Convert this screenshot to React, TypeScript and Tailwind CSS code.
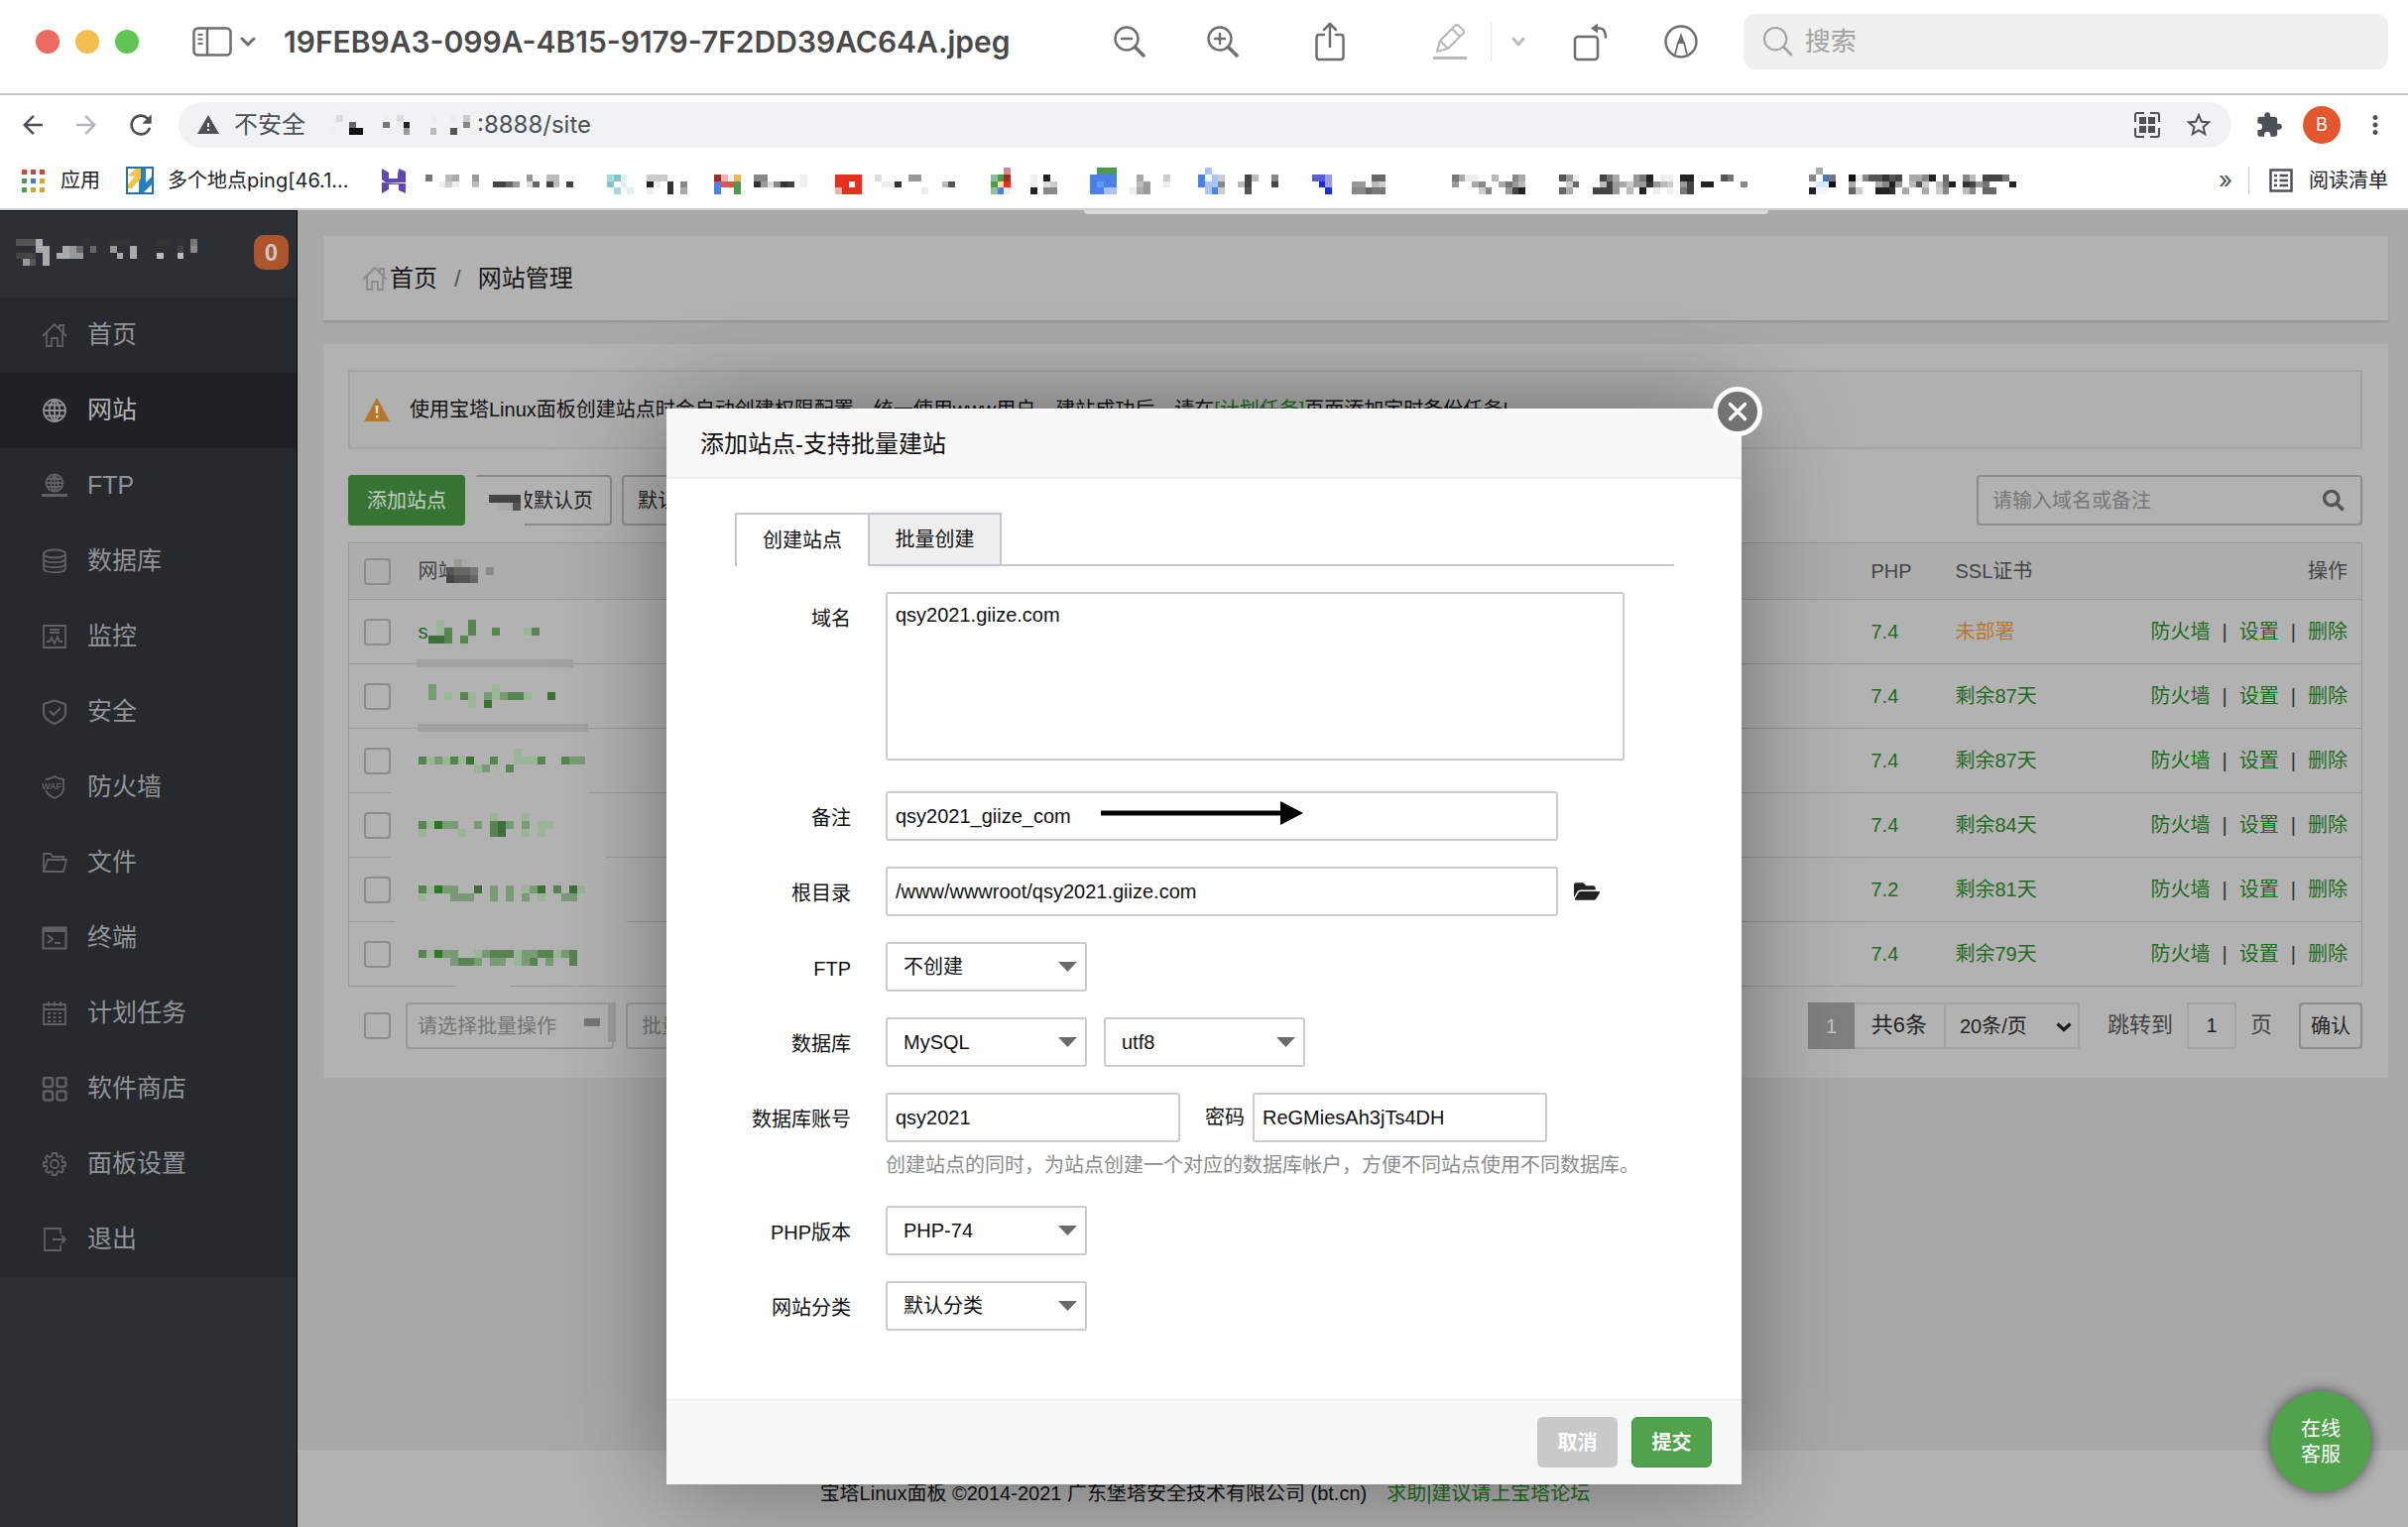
import type { ReactNode } from 'react';
import {
  MdArrowBack,
  MdArrowForward,
  MdExtension,
  MdMoreVert,
  MdRefresh,
  MdStarBorder,
  MdWarning,
} from 'react-icons/md';
import { FaFolderOpen, FaSearch } from 'react-icons/fa';

// Hex digits are greys, the other letters are the tints used in the pixelated patches
const palette: Record<string, string> = {
  T: '#7fc5c9', t: '#a6d9da', u: '#def1f1',
  R: '#e8301f', r: '#dd5546', D: '#a02c26', p: '#eeb4ad', P: '#d08d8d',
  Y: '#e8bb4a', y: '#f3e2a2', G: '#4a9b4e', g: '#8fbf98',
  B: '#4a80e8', h: '#5b9bf2', l: '#a9c4f5', s: '#4a76b8', L: '#d3eafc',
  V: '#5a5cd6', v: '#9a9cee', N: '#1a2cd4', w: '#f5f5fc',
  k: '#3f6f38', m: '#588452', n: '#789a74', o: '#9bb598', q: '#2e7723',
};

function Mosaic({ rows, cell = 6.77 }: { rows: string[]; cell?: number }) {
  const cols = Math.max(...rows.map((row) => row.length));
  return (
    <svg
      aria-hidden="true"
      className="shrink-0"
      width={Math.round(cols * cell)}
      height={Math.round(rows.length * cell)}
      viewBox={`0 0 ${cols} ${rows.length}`}
      preserveAspectRatio="none"
      shapeRendering="crispEdges"
    >
      {rows.map((row, y) =>
        row.split('').map((c, x) =>
          c === '.' ? null : (
            <rect key={`${x}-${y}`} x={x} y={y} width={1} height={1} fill={palette[c] ?? `#${c.repeat(6)}`} />
          ),
        ),
      )}
    </svg>
  );
}

const bookmarks = [
  { width: 'w-[108px]', icon: ['....', 'tTu.', 'T.u.', '.t.u'], label: ['......', 'ccc...', '2e.3.8', 'e..3.a'] },
  { width: 'w-[122px]', icon: ['....', 'DpwY', 'BrrG', 'B..G'], label: ['........', '88.....e', '39d834.e', '.f...f..'] },
  { width: 'w-[150px]', icon: ['....', 'RRRR', 'RRwR', 'pRRR'], label: ['............', 'd....99.....', '.ee3......b5', '....f..e.f..'] },
  { width: 'w-[107px]', icon: ['...P', '.gGD', '.GyR', '.gBe'], label: ['.....', '.e.2.', '.e.dc', '.2.88'] },
  { width: 'w-[109px]', icon: ['.GGG', 'BBBB', 'BhBB', 'BBll'], label: ['......', '.a...c', '.b9..e', 'ea9...'] },
  { width: 'w-[115px]', icon: ['.l..', 'Bwlc', 'Bll8', '.lBc'], label: ['......', '.4b..8', 'b4...4', '.5....'] },
  { width: 'w-[101px]', icon: ['...', 'VVv', 'wNv', '..N'], label: ['.....', '...66', '99.bc', '88677'] },
  { width: 'w-[108px]', icon: [], label: ['...........', '7aee..bf.8a', '9..a8..a79b', '....c8..942'] },
  { width: 'w-[292px]', icon: [], label: ['............................', '59e...47a..972.ee.22....57..', '.c6...b49ac9939bc.94.22....8', '6a...4449.b.2.e.e.74........'] },
  { width: 'w-[220px]', icon: ['.af.', '8.s7', '.LL1', '2ww.'], label: ['.........................', '1e855354.aa82.6..8b.4447.', 'af..a829.b5c.b72.3497...2', '6c..223.a..a.c8..b8.66...'] },
];

const sites = [
  { prefix: 's', php: '7.4', ssl: '未部署', expired: true, smudge: 'left-[14px] w-[158px] h-2 bg-[#a1a1a1]', name: ['.o...m........', '.om..m..m...om', 'kkm.m.........'] },
  { prefix: '\u00a0', php: '7.4', ssl: '剩余87天', smudge: 'left-[15px] w-[172px] h-2 bg-[#a1a1a1]', name: ['n.......o.......', 'n.o.mo.nonmmo..k', '.....o.k........'] },
  { php: '7.4', ssl: '剩余87天', smudge: '-left-[11px] w-[198px] h-1 bg-[#b2b2b2]', name: ['............o........', 'monomok..m..ooom..mnn', '.......on..m.........'] },
  { php: '7.4', ssl: '剩余84天', smudge: '-left-[11px] w-[216px] h-1 bg-[#b2b2b2]', name: ['.........o...o...', 'moqnn..n.mkn.n.oo', 'o....o...mk..o.o.'] },
  { php: '7.2', ssl: '剩余81天', smudge: '-left-[7px] w-[232px] h-1 bg-[#b2b2b2]', name: ['.....................', 'moqnn..k.n.n.onk.m.ko', 'o...nnn..n.n.n.o..nn.'] },
  { php: '7.4', ssl: '剩余79天', smudge: 'left-[54px] w-[54px] h-1 bg-[#b2b2b2]', name: ['....................', 'moqnn..onmmmonnmmonm', '....nmmn.nn.onm.n..m'] },
];

const icons: Record<string, ReactNode> = {
  home: <path d="M1 14 13 2l12 12M5 11v13h5v-8h6v8h5V11M18 6V3h4v7" />,
  globe: (
    <>
      <circle cx="13" cy="13" r="11" />
      <path d="M13 2v22M2 13h22M4 7.500h18M4 18.500h18M13 2c-7 6-7 16 0 22M13 2c7 6 7 16 0 22" />
    </>
  ),
  ftp: (
    <>
      <circle cx="13" cy="10" r="8.500" />
      <path d="M13 1v18M5 10h16M6 6h14M6 14h14M13 2c-5 5-5 12 0 17M13 2c5 5 5 12 0 17" />
      <path d="M0 22.500h26M9 22.500h8" strokeWidth="3" />
    </>
  ),
  database: (
    <>
      <ellipse cx="13" cy="5.500" rx="11" ry="4" />
      <path d="M2 5.500v15c0 5 22 5 22 0v-15M2 10.500c0 5 22 5 22 0M2 15.500c0 5 22 5 22 0" />
    </>
  ),
  monitor: <path d="M2 2h22v22H2zM8 6h10M8 9h10M5 18h3l2-4 3 6 3-7 2 5h3" />,
  shield: <path d="M13 1.500 24 5v9c0 6-6 9-11 11C8 23 2 20 2 14V5zM8 12l4 4 7-7" strokeWidth="2.200" />,
  waf: (
    <>
      <path d="M4 5c4 0 6-1 9-3 3 2 6 3 9 3v9c0 6-5 8-9 10-4-2-8-4-9-8" />
      <text x="0" y="15" fontSize="9" fontWeight="700" fill="currentColor" stroke="none">WAF</text>
    </>
  ),
  folder: <path d="M2 22V4h7l2 3h11v3M2 22 6 10h19l-3 12z" />,
  terminal: (
    <>
      <path d="M1.500 2.500h23v21h-23zM6 10l5 4-5 4M13 18h6" strokeWidth="2.200" />
      <path d="M2 5h22" strokeWidth="4" />
    </>
  ),
  calendar: (
    <>
      <path d="M2 4h22v20H2zM2 9h22M7 1v5M13 1v5M19 1v5" />
      <path d="M6 13h14M6 17h14M6 21h14" strokeDasharray="3 2.500" />
    </>
  ),
  apps: (
    <g strokeWidth="2.500">
      <rect x="2" y="2" width="9" height="9" rx="2" />
      <rect x="15.500" y="2" width="9" height="9" rx="2" />
      <rect x="2" y="15.500" width="9" height="9" rx="2" />
      <rect x="15.500" y="15.500" width="9" height="9" rx="2" />
    </g>
  ),
  gear: (
    <>
      <path d="m11 2-.6 3L8 6.200 5.400 4.600 3.800 7.200 5.500 9.500 5 11H2v4h3l.8 2-1.700 2.500 2.700 2.500L9 20.500l1.500.7L11 24h4l.6-3 1.900-.8 2.600 1.500 2-2.700-1.600-2.400L21 15h3v-4h-3l-.8-2 1.600-2.400-2.600-2.100L17 6l-1.500-.8L15 2z" />
      <circle cx="13" cy="13" r="4" />
    </>
  ),
  exit: <path d="M19 7V2H3v22h16v-5M11 13h13M20 9l4 4-4 4" />,
};

function Icon({ name, className }: { name: string; className?: string }) {
  return (
    <svg viewBox="0 0 26 26" width="26" height="26" fill="none" stroke="currentColor" strokeWidth="1.800" className={className} aria-hidden="true">
      {icons[name]}
    </svg>
  );
}

const menu = [
  { icon: 'home', label: '首页' },
  { icon: 'globe', label: '网站', active: true },
  { icon: 'ftp', label: 'FTP' },
  { icon: 'database', label: '数据库' },
  { icon: 'monitor', label: '监控' },
  { icon: 'shield', label: '安全' },
  { icon: 'waf', label: '防火墙' },
  { icon: 'folder', label: '文件' },
  { icon: 'terminal', label: '终端' },
  { icon: 'calendar', label: '计划任务' },
  { icon: 'apps', label: '软件商店' },
  { icon: 'gear', label: '面板设置' },
  { icon: 'exit', label: '退出' },
];

function PreviewToolbar() {
  return (
    <header className="flex h-24 items-center border-b-2 border-[#c4c4c4] bg-white pb-2.5 pr-5 pl-9 text-[#6e6e6e]">
      <div className="flex gap-4">
        <span className="size-6 rounded-full bg-[#ec6a5e]" />
        <span className="size-6 rounded-full bg-[#f4bf4f]" />
        <span className="size-6 rounded-full bg-[#61c554]" />
      </div>
      <button aria-label="边栏" className="ml-[54px] flex items-center gap-2">
        <svg width="40" height="30" viewBox="0 0 40 30" fill="none" stroke="currentColor" strokeWidth="2.500">
          <rect x="1.500" y="1.500" width="37" height="27" rx="4" />
          <path d="M15 2v26" />
          <path d="M5.500 8h5M5.500 12.500h5M5.500 17h5" strokeWidth="2" />
        </svg>
        <svg width="16" height="10" viewBox="0 0 16 10" fill="none" stroke="currentColor" strokeWidth="3">
          <path d="m2 2 6 6 6-6" strokeLinecap="round" strokeLinejoin="round" />
        </svg>
      </button>
      <h1 className="ml-7 flex-1 font-['Inter'] text-[30px] font-semibold text-[#4a4a4a]">
        19FEB9A3-099A-4B15-9179-7F2DD39AC64A.jpeg
      </h1>
      <button aria-label="缩小">
        <svg width="32" height="32" viewBox="0 0 32 32" fill="none" stroke="currentColor" strokeWidth="2.400" strokeLinecap="round">
          <circle cx="13" cy="13" r="11.500" />
          <path d="M8 13h10" />
          <path d="m22 22 8 8" strokeWidth="3.500" />
        </svg>
      </button>
      <button aria-label="放大" className="ml-[62px]">
        <svg width="32" height="32" viewBox="0 0 32 32" fill="none" stroke="currentColor" strokeWidth="2.400" strokeLinecap="round">
          <circle cx="13" cy="13" r="11.500" />
          <path d="M8 13h10M13 8v10" />
          <path d="m22 22 8 8" strokeWidth="3.500" />
        </svg>
      </button>
      <button aria-label="共享" className="ml-[77px]">
        <svg width="30" height="40" viewBox="0 0 30 40" fill="none" stroke="currentColor" strokeWidth="2.500" strokeLinecap="round" strokeLinejoin="round">
          <path d="M9 13H4q-2.500 0-2.500 3v19q0 3 2.500 3h22q2.500 0 2.500-3V16q0-3-2.500-3h-5M15 25V2M9 8l6-6 6 6" />
        </svg>
      </button>
      <button aria-label="高亮" className="ml-[89px] text-[#b9b9b9]">
        <svg width="34" height="38" viewBox="0 0 34 38" fill="none" stroke="currentColor" strokeWidth="2.200" strokeLinejoin="round">
          <path d="M4 29 7 18 22 3q2-2 4 0l4 4q2 2 0 4L15 26zM7 18l8 8M19 6l8 8" />
          <path d="M0 35.500h34" strokeWidth="3" />
        </svg>
      </button>
      <span className="ml-6 h-10 w-px bg-[#e3e3e3]" />
      <button aria-label="高亮颜色" className="ml-5 text-[#b9b9b9]">
        <svg width="14" height="10" viewBox="0 0 14 10" fill="none" stroke="currentColor" strokeWidth="2.800" strokeLinecap="round" strokeLinejoin="round">
          <path d="m2 2 5 6 5-6" />
        </svg>
      </button>
      <button aria-label="旋转" className="ml-12">
        <svg width="36" height="44" viewBox="0 0 36 44" fill="none" stroke="currentColor" strokeWidth="2.500">
          <rect x="2" y="17" width="23" height="23" rx="3" />
          <path d="M23 8.500h4q6 0 6 10" />
          <path d="m18 8.500 7-5v10z" fill="currentColor" stroke="none" />
        </svg>
      </button>
      <button aria-label="标记" className="ml-14">
        <svg width="34" height="34" viewBox="0 0 34 34" fill="none" stroke="currentColor" strokeWidth="2.400">
          <circle cx="17" cy="17" r="15.500" />
          <path d="M11 30 14 18h6l3 12" strokeWidth="1.800" />
          <path d="m17 8 4 11h-8z" fill="currentColor" stroke="none" />
        </svg>
      </button>
      <label className="ml-[46px] flex h-14 w-[650px] items-center gap-3 rounded-xl bg-[#f0f0f0] px-5 text-[#a3a3a3]">
        <svg width="32" height="32" viewBox="0 0 32 32" fill="none" stroke="currentColor" strokeWidth="2.200" strokeLinecap="round">
          <circle cx="13" cy="13" r="12" />
          <path d="m22 22 8 8" strokeWidth="3" />
        </svg>
        <input aria-label="搜索" placeholder="搜索" className="w-full bg-transparent text-[26px] outline-none placeholder:text-[#a3a3a3]" />
      </label>
    </header>
  );
}

function BrowserBars() {
  return (
    <div className="border-b-2 border-[#cfcfcf] bg-white font-['Inter','Noto_Sans_CJK_SC',sans-serif]">
      <div className="flex h-[60px] items-center pl-[18px] text-[#4d5156]">
        <button aria-label="后退"><MdArrowBack size={30} /></button>
        <button aria-label="前进" className="ml-6 text-[#b4b6b9]"><MdArrowForward size={30} /></button>
        <button aria-label="刷新" className="ml-6"><MdRefresh size={32} /></button>
        <div className="ml-[22px] flex h-[46px] flex-1 items-center rounded-full bg-[#f1f2f4] px-[18px] text-2xl">
          <MdWarning size={24} />
          <span className="ml-3.5">不安全</span>
          <span className="ml-6"><Mosaic rows={['.d......e.d....e..e.c.', '...6....7.e2........8.', 'e..11......9...b..5..e']} /></span>
          <span className="flex-1">:8888/site</span>
          <button aria-label="二维码">
            <svg width="26" height="26" viewBox="0 0 26 26" fill="none" stroke="currentColor" strokeWidth="2">
              <path d="M1 10V3q0-2 2-2h7M16 1h7q2 0 2 2v7M25 16v7q0 2-2 2h-7M10 25H3q-2 0-2-2v-7" />
              <path d="M5 5h7v7H5zM14 5h7v7h-7zM5 14h7v7H5zM14 14h7v7h-7z" fill="currentColor" stroke="none" />
            </svg>
          </button>
          <button aria-label="收藏" className="ml-6"><MdStarBorder size={30} /></button>
        </div>
        <button aria-label="扩展程序" className="ml-6"><MdExtension size={28} /></button>
        <button aria-label="用户" className="ml-5 size-[38px] rounded-full bg-[#e4572e] text-lg text-white">B</button>
        <button aria-label="菜单" className="mr-[18px] ml-5"><MdMoreVert size={30} /></button>
      </div>
      <nav className="flex h-[54px] items-center pr-5 pb-0.5 pl-[22px] text-xl text-[#202124]">
        <a href="#apps" className="flex items-center gap-4">
          <svg width="23" height="23" viewBox="0 0 23 23">
            <path d="M0 0h5v5H0zM9 0h5v5H9zM18 0h5v5h-5z" fill="#d0443a" />
            <path d="M0 9h5v5H0zM0 18h5v5H0z" fill="#4a9b4e" />
            <path d="M9 9h5v5H9z" fill="#3f7de0" />
            <path d="M18 9h5v5h-5zM9 18h5v5H9zM18 18h5v5h-5z" fill="#d9a236" />
          </svg>
          应用
        </a>
        <a href="#ping" className="ml-[26px] flex w-[258px] items-center gap-3.5">
          <svg width="28" height="28" viewBox="0 0 28 28" className="shrink-0">
            <path d="M1 1h26v26H1z" fill="#fff" stroke="#2a6fa8" strokeWidth="2" />
            <path d="M15 2h5v14l6-6v8l-8 8h-5v-9z" fill="#2a7fc0" />
            <path d="M2 9 10 2h5v10L6 22H2v-4l7-8z" fill="#f3c542" />
          </svg>
          <span className="whitespace-nowrap">多个地点ping[46.1...</span>
        </a>
        <a href="#h" aria-label="书签" className="flex w-[227px] items-center gap-5">
          <svg width="24" height="25" viewBox="0 0 24 25" fill="#5f48b5" className="shrink-0">
            <path d="M0 0 7 4v6h9V6l1-6 7 3v11H4L0 11zM0 25V14l19 1h5v10l-7-3v-6H7v5z" />
          </svg>
          <Mosaic rows={['......................', '7..ba..9.......9..bb..', '..ece..b..4469.d6.4b.4', '....f.................']} />
        </a>
        {bookmarks.map((b, i) => (
          <a key={i} href="#bookmark" aria-label="书签" className={`flex shrink-0 items-center gap-3 ${b.width}`}>
            <span className="w-7 shrink-0">{b.icon.length > 0 && <Mosaic rows={b.icon} />}</span>
            <Mosaic rows={b.label} />
          </a>
        ))}
        <button aria-label="更多书签" className="ml-auto text-2xl leading-none text-[#4d5156]">»</button>
        <span className="ml-4 h-7 w-px bg-[#c8cacd]" />
        <button className="ml-5 flex shrink-0 items-center gap-4">
          <svg width="24" height="24" viewBox="0 0 24 24" fill="none" stroke="#4d5156" strokeWidth="2.500">
            <path d="M1.500 1.500h21v21h-21zM5 7h3M5 12h3M5 17h3M10.500 7H19M10.500 12H19M10.500 17H19" />
          </svg>
          阅读清单
        </button>
      </nav>
    </div>
  );
}

function Sidebar() {
  return (
    <aside className="w-[300px] shrink-0 border-t border-r border-black bg-[#2c2f34]">
      <div className="flex h-[87px] items-center justify-between pr-2 pb-1 pl-4">
        <Mosaic rows={['555a......3...333....33.3.7', '...aa..a96.6..9..a......4.8', '444.a.aa99.....a.a...b..b..', '.95.a......................']} />
        <span className="flex size-[35px] items-center justify-center rounded-[10px] bg-[#ae552c] text-2xl font-bold text-[#d0c6c2]">0</span>
      </div>
      <nav className="bg-[#26292e]">
        {menu.map((item) => (
          <a
            key={item.label}
            href={`#${item.icon}`}
            className={`flex h-[76px] items-center gap-5 pl-[42px] text-[25px] ${item.active ? 'bg-[#202126] text-[#b2b2b2]' : 'text-[#919396]'}`}
          >
            <Icon name={item.icon} className={item.active ? 'text-[#8e9094]' : 'text-[#5d6065]'} />
            {item.label}
          </a>
        ))}
      </nav>
    </aside>
  );
}

function Checkbox({ label }: { label: string }) {
  return <input type="checkbox" aria-label={label} className="block size-[27px] appearance-none rounded border-2 border-[#8c8c8c]" />;
}

function SiteTable() {
  return (
    <table className="mt-[17px] w-full table-fixed border border-[#989898] text-left text-xl text-[#444]">
      <thead>
        <tr className="h-[57px] border-b border-[#989898] bg-[#adadad]">
          <th className="w-[54px] pl-[15px]"><Checkbox label="全选" /></th>
          <th className="pl-4 font-normal">
            <div className="flex items-center">
              <span className="whitespace-nowrap">网站</span>
              <span className="relative -ml-3 bg-[#adadad]"><Mosaic cell={8} rows={['.9a...', '5667.8', '4556..']} /></span>
            </div>
          </th>
          <th className="w-[85px] font-normal">PHP</th>
          <th className="w-[170px] font-normal">SSL证书</th>
          <th className="w-60 pr-3.5 text-right font-normal">操作</th>
        </tr>
      </thead>
      <tbody>
        {sites.map((site, i) => (
          <tr key={i} className="h-[65px] border-b border-[#989898] text-[#1e6b1e]">
            <td className="pl-[15px]"><Checkbox label="选择站点" /></td>
            <td className="relative pl-4">
              <div className="flex items-center">
                {site.prefix && <span className="w-2.5">{site.prefix}</span>}
                <Mosaic cell={8} rows={site.name} />
              </div>
              <span className={`absolute -bottom-1 ${site.smudge}`} />
            </td>
            <td>{site.php}</td>
            <td className={site.expired ? 'text-[#b57a34]' : ''}>{site.ssl}</td>
            <td className="pr-3.5">
              <div className="flex justify-end gap-3">
                <a href="#firewall">防火墙</a>
                <span className="text-[#333]">|</span>
                <a href="#settings">设置</a>
                <span className="text-[#333]">|</span>
                <a href="#delete">删除</a>
              </div>
            </td>
          </tr>
        ))}
      </tbody>
    </table>
  );
}

function Pagination() {
  return (
    <div className="mt-4 flex h-[47px] items-center text-xl text-[#222]">
      <span className="ml-4"><Checkbox label="批量选择" /></span>
      <div className="relative ml-[15px] h-full w-[210px]">
        <select aria-label="批量操作" className="h-full w-full appearance-none rounded border-2 border-[#999] px-2.5 text-[#757575]">
          <option>请选择批量操作</option>
        </select>
        <span className="pointer-events-none absolute top-4 right-3.5 h-2 w-4 bg-[#777]" />
        <span className="pointer-events-none absolute top-0 -right-0.5 h-10 w-2 bg-[#9c9c9c]" />
      </div>
      <button className="ml-3 h-full w-28 rounded border-2 border-[#999] text-[#757575]">批量操作</button>
      <button className="ml-auto h-full w-[47px] bg-[#808080] text-[#c4c4c4]">1</button>
      <span className="flex h-full w-[92px] items-center justify-center border-y-2 border-r-2 border-[#a3a3a3] text-[22px]">共6条</span>
      <div className="relative h-full w-[135px]">
        <select aria-label="每页条数" className="h-full w-full appearance-none border-y-2 border-r-2 border-[#a3a3a3] px-3.5">
          <option>20条/页</option>
        </select>
        <svg className="pointer-events-none absolute top-5 right-2" width="16" height="10" viewBox="0 0 16 10" fill="none" stroke="#1c1c1c" strokeWidth="3.200">
          <path d="m1.500 1.500 6.500 6 6.500-6" />
        </svg>
      </div>
      <label htmlFor="jump" className="ml-7 text-[22px] text-[#444]">跳转到</label>
      <input id="jump" defaultValue="1" className="ml-3.5 h-full w-[50px] border-2 border-[#a3a3a3] text-center" />
      <span className="ml-3.5 text-[22px] text-[#444]">页</span>
      <button className="ml-[27px] h-full w-[64px] rounded border-2 border-[#8c8c8c]">确认</button>
    </div>
  );
}

function Main() {
  return (
    <main className="flex flex-1 flex-col bg-[#a9a9a9]">
      <div className="flex flex-col gap-6 pt-[26px] pr-5 pl-[26px]">
        <nav className="flex h-[85px] items-center bg-[#b2b2b2] pl-[39px] text-2xl text-[#161616] shadow-[0_2px_2px_rgba(0,0,0,0.12)]">
          <Icon name="home" className="mr-0.5 text-[#8b8b8b]" />
          <a href="#home">首页</a>
          <span className="mx-[17px] text-[#555]">/</span>
          <span>网站管理</span>
        </nav>
        <section className="bg-[#b2b2b2] px-[26px] pt-[26px] pb-[29px] pl-[25px]">
          <div className="flex h-20 items-center border-2 border-[#a4a4a4] bg-[#b0b0b0] pl-3.5 text-xl text-[#111]">
            <svg width="26" height="24" viewBox="0 0 26 24" className="mr-5">
              <path d="M13 0 26 24H0z" fill="#b57729" />
              <path d="M11.500 8h3l-.5 8h-2zM12 18h2.500v2.500H12z" fill="#ddd" />
            </svg>
            <p>
              使用宝塔Linux面板创建站点时会自动创建权限配置，统一使用www用户，建站成功后，请在
              <a href="#cron" className="text-[#1e6b1e]">[计划任务]</a>
              页面添加定时备份任务!
            </p>
          </div>
          <div className="mt-[26px] flex h-[51px] items-stretch gap-2.5 text-xl text-[#222]">
            <button className="w-[118px] rounded bg-[#377434] text-[#c2cdc1]">添加站点</button>
            <button className="relative w-[138px] rounded border-2 border-[#8c8c8c]">
              修改默认页
              <span className="absolute top-0 -left-0.5 flex h-[51px] w-[50px] items-center bg-[#b2b2b2] pl-3.5">
                <Mosaic cell={8} rows={['4444', '.aa5']} />
              </span>
            </button>
            <button className="w-28 rounded border-2 border-[#8c8c8c]">默认站点</button>
            <label className="ml-auto flex w-[389px] items-center rounded border-2 border-[#8c8c8c] pr-4 pl-3.5 text-[#555]">
              <input aria-label="请输入域名或备注" placeholder="请输入域名或备注" className="w-full bg-transparent outline-none placeholder:text-[#777]" />
              <FaSearch size={23} />
            </label>
          </div>
          <SiteTable />
          <Pagination />
        </section>
      </div>
      <footer className="mt-auto flex h-[77px] items-center justify-center gap-5 bg-[#b2b2b2] pt-2 pr-[298px] text-xl text-[#111]">
        <span>宝塔Linux面板 ©2014-2021 广东堡塔安全技术有限公司 (bt.cn)</span>
        <a href="#bbs" className="text-[#1e6b1e]">求助|建议请上宝塔论坛</a>
      </footer>
    </main>
  );
}

const field = 'h-[50px] rounded-[3px] border-2 border-[#ccc] bg-white px-2 text-xl text-[#111] outline-none';

function Row({ id, label, children }: { id: string; label: string; children: ReactNode }) {
  return (
    <div className="grid grid-cols-[186px_1fr] gap-x-[35px]">
      <label htmlFor={id} className="pt-[11px] text-right leading-8">{label}</label>
      <div className="flex items-center">{children}</div>
    </div>
  );
}

function Select({ id, value, label }: { id: string; value: string; label?: string }) {
  return (
    <div className="relative mr-[17px]">
      <select id={id} aria-label={label} className="h-[50px] w-[203px] appearance-none rounded-[3px] border-2 border-[#ccc] bg-white px-4 text-xl text-[#111]">
        <option>{value}</option>
      </select>
      <svg className="pointer-events-none absolute top-5 right-2.5" width="19" height="10" viewBox="0 0 19 10" fill="#6b6b6b">
        <path d="M0 0h19L9.500 10z" />
      </svg>
    </div>
  );
}

function SiteDialog() {
  return (
    <div role="dialog" aria-label="添加站点" className="relative w-[1084px] bg-white text-xl text-[#111] shadow-[2px_2px_100px_rgba(0,0,0,0.4)]">
      <button aria-label="关闭" className="absolute -top-[22px] -right-[21px] flex size-[50px] items-center justify-center rounded-full border-[5px] border-white bg-[#737373]">
        <svg width="20" height="20" viewBox="0 0 20 20" stroke="#fff" strokeWidth="3.500" strokeLinecap="round">
          <path d="m2.500 2.500 15 15M17.500 2.500l-15 15" />
        </svg>
      </button>
      <h2 className="flex h-[71px] items-center border-b-2 border-[#eee] bg-[#f8f8f8] pt-0.5 pl-[34px] text-2xl">添加站点-支持批量建站</h2>
      <div className="ml-[69px] mr-[68px] mt-[34px] flex h-[54px]" role="tablist">
        <button role="tab" aria-selected="true" className="w-[134px] border-t-2 border-l-2 border-[#c5c5d0]">创建站点</button>
        <button role="tab" aria-selected="false" className="w-[135px] border-2 border-[#c5c5d0] bg-[#efefef]">批量创建</button>
        <span className="flex-1 border-b-2 border-[#c5c5d0]" />
      </div>
      <form className="mt-[26px] flex flex-col gap-[26px] pb-[69px]">
        <div className="mb-[5px]">
          <Row id="domain" label="域名">
            <textarea id="domain" defaultValue="qsy2021.giize.com" className="h-[170px] w-[745px] resize-none rounded-[3px] border-2 border-[#ccc] px-2 py-[7px] text-xl outline-none" />
          </Row>
        </div>
        <Row id="remark" label="备注">
          <div className="relative">
            <input id="remark" defaultValue="qsy2021_giize_com" className={`w-[678px] ${field}`} />
            <svg className="pointer-events-none absolute top-2.5 left-[217px]" width="204" height="24" viewBox="0 0 204 24">
              <path d="M0 9.500h181V0l23 12-23 12v-9.500H0z" fill="#050505" />
            </svg>
          </div>
        </Row>
        <Row id="root-dir" label="根目录">
          <input id="root-dir" defaultValue="/www/wwwroot/qsy2021.giize.com" className={`w-[678px] ${field}`} />
          <button type="button" aria-label="选择目录" className="ml-4 text-[#222]"><FaFolderOpen size={26} /></button>
        </Row>
        <Row id="ftp" label="FTP"><Select id="ftp" value="不创建" /></Row>
        <Row id="db" label="数据库">
          <Select id="db" value="MySQL" />
          <Select id="charset" value="utf8" label="字符集" />
        </Row>
        <div>
          <Row id="db-user" label="数据库账号">
            <input id="db-user" defaultValue="qsy2021" className={`w-[297px] ${field}`} />
            <label htmlFor="db-pass" className="mr-2 ml-[25px]">密码</label>
            <input id="db-pass" defaultValue="ReGMiesAh3jTs4DH" className={`w-[297px] ${field}`} />
          </Row>
          <p className="ml-[221px] h-[38px] pt-[9px] leading-7 text-[#8c8c8c]">创建站点的同时，为站点创建一个对应的数据库帐户，方便不同站点使用不同数据库。</p>
        </div>
        <Row id="php" label="PHP版本"><Select id="php" value="PHP-74" /></Row>
        <Row id="category" label="网站分类"><Select id="category" value="默认分类" /></Row>
      </form>
      <div className="flex h-[86px] items-center justify-end gap-3.5 border-t border-[#ebebeb] bg-[#f6f7f7] pr-[30px] font-bold text-white">
        <button className="h-[51px] w-[81px] rounded-md bg-[#c9c9c9]">取消</button>
        <button className="h-[51px] w-[81px] rounded-md border border-[#3f9440] bg-[#50a24b]">提交</button>
      </div>
    </div>
  );
}

export default function App() {
  return (
    <div className="flex min-h-screen flex-col font-['Liberation_Sans','Noto_Sans_CJK_SC',sans-serif]">
      <PreviewToolbar />
      <BrowserBars />
      <div className="relative flex flex-1 overflow-hidden">
        <Sidebar />
        <Main />
        <span className="absolute top-0 left-[1093px] h-1 w-[690px] rounded-b-full bg-[#d9dadb]" />
        <div className="absolute inset-0 flex items-start justify-center pt-[200px]">
          <SiteDialog />
        </div>
        <button className="absolute right-[37px] bottom-[35px] size-[102px] rounded-full bg-[#50a24b] text-xl leading-[26px] text-white shadow-[0_0_14px_rgba(0,0,0,0.6)]">
          在线
          <br />
          客服
        </button>
      </div>
    </div>
  );
}
